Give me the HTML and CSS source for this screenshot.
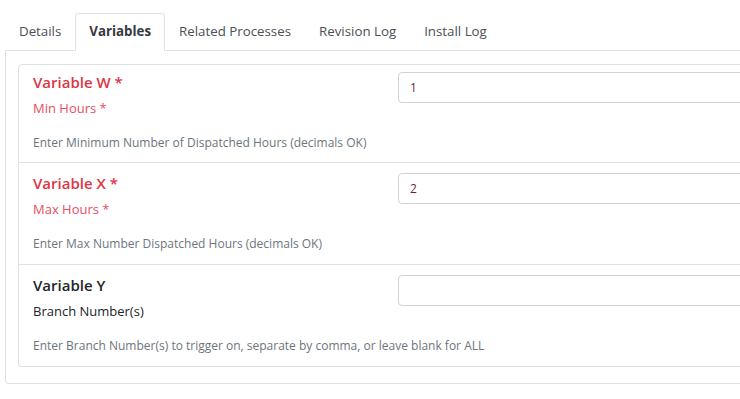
FILE: index.html
```html
<!DOCTYPE html>
<html lang="en">
<head>
    <meta charset="UTF-8">
    <meta name="viewport" content="width=device-width, initial-scale=1.0">
    <title>Process Variables</title>
    <link rel="stylesheet" href="styles.css">
</head>
<body>
    <div class="container">
        <ul class="tabs">
            <li class="tab">Details</li>
            <li class="tab active">Variables</li>
            <li class="tab">Related Processes</li>
            <li class="tab">Revision Log</li>
            <li class="tab">Install Log</li>
        </ul>

        <div class="tab-panel">
            <div class="variable-list">
                <div class="variable required">
                    <div class="variable-info">
                        <div class="variable-name">Variable W *</div>
                        <div class="variable-label">Min Hours *</div>
                    </div>
                    <input type="text" class="variable-input" value="1">
                    <div class="variable-help">Enter Minimum Number of Dispatched Hours (decimals OK)</div>
                </div>

                <div class="variable required">
                    <div class="variable-info">
                        <div class="variable-name">Variable X *</div>
                        <div class="variable-label">Max Hours *</div>
                    </div>
                    <input type="text" class="variable-input" value="2">
                    <div class="variable-help">Enter Max Number Dispatched Hours (decimals OK)</div>
                </div>

                <div class="variable">
                    <div class="variable-info">
                        <div class="variable-name">Variable Y</div>
                        <div class="variable-label">Branch Number(s)</div>
                    </div>
                    <input type="text" class="variable-input" value="">
                    <div class="variable-help">Enter Branch Number(s) to trigger on, separate by comma, or leave blank for ALL</div>
                </div>
            </div>
        </div>
    </div>
</body>
</html>
```

FILE: styles.css
```css
body {
    font-family: "Open Sans", "Noto Sans", sans-serif;
    margin: 0;
    padding: 0;
    background-color: #fff;
    color: #212529;
    overflow: hidden;
}

.container {
    width: 1100px;
    padding: 13px 0 0 5px;
}

.tabs {
    display: flex;
    list-style: none;
    margin: 0;
    padding: 0;
    border-bottom: 1px solid #dee2e6;
}

.tab {
    padding: 7px 13px 8px;
    font-size: 13.3px;
    line-height: 21px;
    color: #495057;
    border: 1px solid transparent;
    border-top-left-radius: 4px;
    border-top-right-radius: 4px;
    margin-bottom: -1px;
}

.tab.active {
    font-weight: bold;
    color: #343a40;
    background-color: #fff;
    border-color: #dee2e6 #dee2e6 #fff;
}

.tab-panel {
    border: 1px solid #dee2e6;
    border-top: none;
    border-radius: 0 0 4px 4px;
    padding: 13px 0 16px 12px;
}

.variable-list {
    display: flex;
    flex-direction: column;
}

.variable {
    display: grid;
    grid-template-columns: 365px 1fr;
    border: 1px solid #dee2e6;
    border-top: none;
    padding: 8px 14px 11px;
}

.variable:first-child {
    border-top: 1px solid #dee2e6;
    border-radius: 4px 4px 0 0;
    padding-top: 5px;
    padding-bottom: 10px;
}

.variable:last-child {
    border-radius: 0 0 4px 4px;
}

.variable-name {
    font-size: 15px;
    font-weight: 600;
    line-height: 24px;
    color: #212529;
}

.variable-label {
    font-size: 13px;
    line-height: 22px;
    margin-top: 3px;
}

.variable-help {
    grid-column: 1 / -1;
    font-size: 12px;
    line-height: 18px;
    color: #6c757d;
    margin-top: 15px;
}

.required .variable-name {
    color: #dc3545;
}

.required .variable-label {
    color: #e4505f;
}

.variable-input {
    align-self: start;
    margin-top: 2px;
    height: 31px;
    box-sizing: border-box;
    border: 1px solid #ced4da;
    border-radius: 4px;
    padding: 0 11px;
    font-family: inherit;
    font-size: 12px;
    color: #6d1f3a;
}
```
